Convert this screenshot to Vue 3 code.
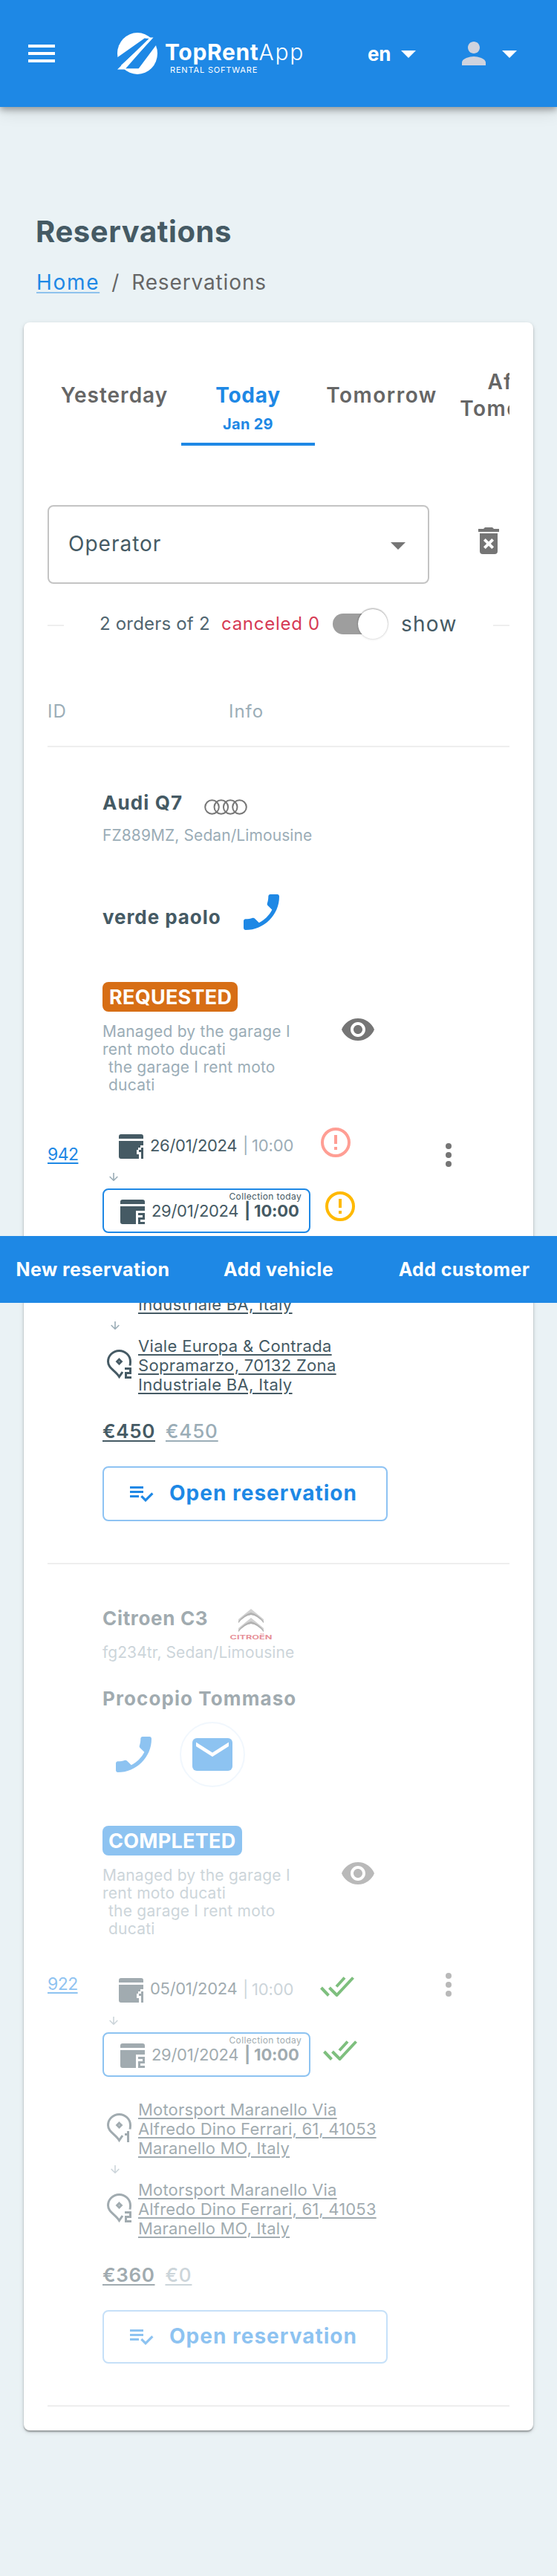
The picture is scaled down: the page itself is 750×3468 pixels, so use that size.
<script setup>
const tabs = [
  { label: 'Yesterday' },
  { label: 'Today', date: 'Jan 29', active: true },
  { label: 'Tomorrow' },
  { label: 'After Tomorrow' },
]
const puglia = ['Viale Europa & Contrada', 'Sopramarzo, 70132 Zona', 'Industriale BA, Italy']
const maranello = ['Motorsport Maranello Via', 'Alfredo Dino Ferrari, 61, 41053', 'Maranello MO, Italy']
const orders = [
  {
    id: '942', car: 'Audi Q7', brand: 'audi', details: 'FZ889MZ, Sedan/Limousine',
    client: 'verde paolo', status: 'REQUESTED', start: '26/01/2024', end: '29/01/2024',
    places: [puglia, puglia], total: '€450', due: '€450', done: false,
  },
  {
    id: '922', car: 'Citroen C3', brand: 'citroen', details: 'fg234tr, Sedan/Limousine',
    client: 'Procopio Tommaso', status: 'COMPLETED', start: '05/01/2024', end: '29/01/2024',
    places: [maranello, maranello], total: '€360', due: '€0', done: true,
  },
]
const phone = 'M17.38 10.79l-2.2-2.2c-.28-.28-.36-.67-.25-1.02.37-1.12.57-2.32.57-3.57 0-.55.45-1 1-1H20c.55 0 1 .45 1 1 0 9.39-7.61 17-17 17-.55 0-1-.45-1-1v-3.49c0-.55.45-1 1-1 1.24 0 2.45-.2 3.57-.57.35-.12.75-.03 1.02.24l2.2 2.2c2.83-1.45 5.15-3.76 6.59-6.59z'
</script>

<template>
  <div class="page">
    <header class="topbar">
      <svg class="burger" viewBox="0 0 36 24"><path d="M0 0h36v4H0zM0 10h36v4H0zM0 20h36v4H0z" fill="#fff" /></svg>
      <div class="brand">
        <svg class="brand-mark" viewBox="0 0 54 56">
          <ellipse cx="27" cy="28" rx="27" ry="28" fill="#fff" />
          <path d="M-1 34 37 7.3 44 8 0 48.6zM11 48.6 46 8.6 50 7 55 13 28.500 48.600z" fill="#1e88e5" />
          <path d="M0 49.500 43 7.500H37L38 6.500H48.500L9.500 48.500H29V49.500z" fill="#fff" />
        </svg>
        <div class="brand-text">
          <div class="brand-name"><b>TopRent</b><span>App</span></div>
          <div class="brand-sub">RENTAL SOFTWARE</div>
        </div>
      </div>
      <span class="lang">en</span>
      <svg class="caret" viewBox="0 0 20 10"><path d="M0 0h20L10 10z" fill="#fff" /></svg>
      <svg class="person" viewBox="4 4 16 16"><path d="M12 12c2.210 0 4-1.790 4-4s-1.790-4-4-4-4 1.790-4 4 1.790 4 4 4zm0 2c-2.670 0-8 1.340-8 4v2h16v-2c0-2.660-5.330-4-8-4z" fill="#cfd3de" /></svg>
      <svg class="caret" viewBox="0 0 20 10"><path d="M0 0h20L10 10z" fill="#fff" /></svg>
    </header>

    <h1 class="title">Reservations</h1>
    <nav class="crumbs"><a>Home</a><span class="slash">/</span><span>Reservations</span></nav>

    <main class="card">
      <div class="tabs">
        <div v-for="t in tabs" :key="t.label" class="tab" :class="{ active: t.active }">
          <div class="tab-label">{{ t.label }}</div>
          <div v-if="t.date" class="tab-date">{{ t.date }}</div>
        </div>
      </div>

      <div class="filter">
        <div class="select">
          <span>Operator</span>
          <svg class="select-caret" viewBox="0 0 20 10"><path d="M0 0h20L10 10z" fill="#757575" /></svg>
        </div>
        <svg class="trash" viewBox="0 0 24 24"><path d="M6,19A2,2 0 0,0 8,21H16A2,2 0 0,0 18,19V7H6V19M8.46,11.88L9.87,10.47L12,12.59L14.12,10.47L15.53,11.88L13.41,14L15.53,16.12L14.12,17.53L12,15.41L9.88,17.53L8.47,16.12L10.59,14L8.46,11.88M15.5,4L14.5,3H9.5L8.5,4H5V6H19V4H15.5Z" fill="#757575" /></svg>
      </div>

      <div class="stats">
        <i class="dash"></i>
        <span class="count">2 orders of 2</span>
        <span class="canceled">canceled 0</span>
        <span class="switch"><i></i></span>
        <span class="show">show</span>
        <i class="dash end"></i>
      </div>

      <div class="thead"><span class="th-id">ID</span><span>Info</span></div>

      <section v-for="o in orders" :key="o.id" class="order" :class="{ done: o.done }">
        <div class="order-body">
          <a class="order-id">{{ o.id }}</a>
          <div class="info">
            <div class="car">
              <span class="strong">{{ o.car }}</span>
              <svg v-if="o.brand === 'audi'" class="audi" viewBox="0 0 58 21">
                <g fill="none" stroke="#777" stroke-width="2">
                  <circle cx="10.500" cy="10.500" r="9.300" /><circle cx="22.800" cy="10.500" r="9.300" />
                  <circle cx="35.200" cy="10.500" r="9.300" /><circle cx="47.500" cy="10.500" r="9.300" />
                </g>
              </svg>
              <svg v-else class="citroen" viewBox="0 0 58 42">
                <path d="M29 0 46 14v5Q38 9 29 8 20 9 12 19v-5zM29 12 46 26v5Q38 21 29 20 20 21 12 31v-5z" fill="#a5a5a5" />
                <path d="M29 5Q38 7 46 17v2Q38 9 29 8 20 9 12 19v-2Q20 7 29 5zM29 17Q38 19 46 29v2Q38 21 29 20 20 21 12 31v-2Q20 19 29 17z" fill="#666" />
                <text x="0.500" y="41" textLength="57" lengthAdjust="spacingAndGlyphs" fill="#cf2030">CITROËN</text>
              </svg>
            </div>
            <div class="details">{{ o.details }}</div>
            <div class="client">
              <span class="strong">{{ o.client }}</span>
              <svg v-if="!o.done" class="phone" viewBox="0 0 24 24"><path :d="phone" fill="#1e88e5" /></svg>
            </div>
            <div v-if="o.done" class="contacts">
              <svg class="phone" viewBox="0 0 24 24"><path :d="phone" fill="#1e88e5" /></svg>
              <span class="mail">
                <svg viewBox="0 0 54 44"><rect width="54" height="44" rx="6" fill="#1e88e5" /><path d="M5 5.500 27 19.500 49 5.500V11L27 25 5 11z" fill="#fff" /></svg>
              </span>
            </div>

            <span class="badge">{{ o.status }}</span>
            <div class="managed">
              <div class="notes">
                <div>Managed by the garage I<br />rent moto ducati</div>
                <div class="sub">the garage I rent moto<br />ducati</div>
              </div>
              <svg class="eye" viewBox="0 0 24 24"><path d="M12 4.500C7 4.500 2.730 7.610 1 12c1.730 4.390 6 7.500 11 7.500s9.270-3.110 11-7.500c-1.730-4.390-6-7.500-11-7.500zM12 17c-2.760 0-5-2.240-5-5s2.240-5 5-5 5 2.240 5 5-2.240 5-5 5zm0-8c-1.660 0-3 1.340-3 3s1.340 3 3 3 3-1.340 3-3-1.340-3-3-3z" fill="#757575" /></svg>
            </div>

            <div v-for="n in 2" :key="'d' + n">
              <svg v-if="n === 2" class="down" viewBox="0 0 12 11"><path d="M6 0v10M.7 5 6 10.200 11.300 5" fill="none" stroke="#9badb7" stroke-width="1.600" /></svg>
              <div class="when" :class="n === 1 ? 'pickup' : 'collect'">
                <div class="datebox">
                  <span v-if="n === 2" class="hint">Collection today</span>
                  <svg class="cal" viewBox="0 0 33 33">
                    <path d="M0 6V3Q0 0 3 0H30Q33 0 33 3V6z" fill="#455a64" />
                    <path v-if="n === 1" d="M0 9H33V15H29V18H26V21H24V27H27V33H3Q0 33 0 30zM30 18H33V33H30V24H27V21H30z" fill="#455a64" />
                    <path v-else d="M0 9H33V15H21V33H3Q0 33 0 30zM24 18H33V27H27V30H33V33H24V24H30V21H24z" fill="#455a64" />
                  </svg>
                  <span class="date">{{ n === 1 ? o.start : o.end }}</span>
                  <span class="bar">|</span><span class="time">10:00</span>
                </div>
                <svg v-if="!o.done" class="state" viewBox="0 0 40 40" :class="n === 1 ? 'late' : 'due'">
                  <circle cx="20" cy="20" r="18" fill="none" stroke="currentColor" stroke-width="4" />
                  <path d="M18 10h4v12h-4zM18 26h4v4h-4z" fill="currentColor" />
                </svg>
                <svg v-else class="state ok" viewBox="0 0 46 27">
                  <path d="M1.500 15 11.500 25.500M12.500 15 22.500 25 44.500 1.500M22 13.500 33 1.500" fill="none" stroke="#008000" stroke-width="4" />
                </svg>
              </div>
            </div>

            <div class="places">
              <div v-for="(p, i) in o.places" :key="i">
                <svg v-if="i === 1" class="down" viewBox="0 0 12 11"><path d="M6 0v10M.7 5 6 10.200 11.300 5" fill="none" stroke="#9badb7" stroke-width="1.600" /></svg>
                <div class="place">
                  <svg class="pin" viewBox="0 0 33 39" fill="none" stroke="#455a64" stroke-width="3">
                    <path d="M31 21.500Q31.500 19 31.500 16A15 14.500 0 0 0 1.500 16C1.500 25 11 28 16.500 36.500L21 30" />
                    <path d="M16.500 13.200 19.300 16 16.500 18.800 13.700 16z" />
                    <path v-if="i === 0" d="M24 28.500H28.500M28.500 24V39" />
                    <path v-else d="M24 25.500H31.500V31.500H25.500V37.500H33" />
                  </svg>
                  <a class="address" :class="{ long: o.done }"><template v-for="(l, k) in p" :key="k">{{ l }}<br /></template></a>
                </div>
              </div>
            </div>

            <div class="prices"><a>{{ o.total }}</a><a class="rest">{{ o.due }}</a></div>
            <button class="open">
              <svg viewBox="0 0 24 24"><path d="M14 10H2v2h12v-2zm0-4H2v2h12V6zM2 16h8v-2H2v2zm19.500-4.500L23 13l-6.990 7-4.510-4.500L13 14l3.010 3 5.490-5.500z" fill="#1e88e5" /></svg>
              <span>Open reservation</span>
            </button>
          </div>
          <svg class="menu" viewBox="0 0 8 32"><circle cx="4" cy="4" r="4" /><circle cx="4" cy="16" r="4" /><circle cx="4" cy="28" r="4" /></svg>
        </div>
      </section>
    </main>

    <div class="actions"><a>New reservation</a><a>Add vehicle</a><a>Add customer</a></div>
  </div>
</template>

<style>
body { background: #eaf2f5; }
</style>

<style scoped>
.page {
  position: relative;
  width: 750px;
  height: 3468px;
  overflow: hidden;
  background: #eaf2f5;
  color: #455a64;
  font-family: Inter, "Open Sans", sans-serif;
  font-weight: 400;
}
.page * { box-sizing: border-box; }
svg { display: block; flex: none; }
span, a { white-space: nowrap; }

.topbar {
  display: flex;
  align-items: center;
  height: 144px;
  padding-left: 38px;
  background: #1e88e5;
  color: #fff;
  box-shadow: 0 4px 8px rgba(0, 0, 0, .3), 0 8px 20px rgba(0, 0, 0, .1);
}
.burger { width: 36px; height: 24px; }
.brand { display: flex; align-items: center; width: 337px; padding-left: 84px; }
.brand-mark { width: 54px; height: 56px; overflow: visible; }
.brand-text { padding: 12px 0 0 10px; }
.brand-name { display: flex; font-size: 30px; line-height: 30px; }
.brand-name b { font-weight: 700; letter-spacing: .022em; }
.brand-name span { font-weight: 300; letter-spacing: .06em; }
.brand-sub { padding: 2px 0 0 7px; font-size: 11px; line-height: 14px; letter-spacing: .076em; }
.lang { width: 45px; margin-left: 84px; padding-top: 2px; font-size: 26px; line-height: 32px; font-weight: 700; letter-spacing: -.01em; }
.caret { width: 20px; height: 10px; margin-top: 2px; }
.person { width: 32px; height: 32px; margin: 0 22px 0 62px; }

.title { margin: 144px 0 0 48px; font-size: 40px; line-height: 48px; font-weight: 700; letter-spacing: .015em; }
.crumbs { display: flex; margin: 26px 0 36px 49px; color: #666; font-size: 28px; line-height: 36px; letter-spacing: .031em; }
.crumbs a { color: #1e88e5; letter-spacing: .06em; text-decoration: underline 2px rgba(30, 136, 229, .45); text-underline-offset: 3px; }
.crumbs .slash { width: 43px; padding-left: 16px; }

.card {
  width: 686px;
  height: 2838px;
  margin-left: 32px;
  padding: 46px 32px 32px;
  border-radius: 8px;
  background: #fff;
  box-shadow: 0 2px 2px rgba(0, 0, 0, .3), 0 2px 6px rgba(0, 0, 0, .14);
}
.tabs { display: flex; height: 120px; overflow: hidden; }
.tab { flex: none; width: 180px; height: 120px; padding: 16px 12px 0; color: #666; text-align: center; }
.tab-label { display: flex; align-items: center; justify-content: center; height: 72px; font-size: 28px; line-height: 36px; font-weight: 600; letter-spacing: .036em; }
.tab:nth-child(n + 3) { padding-inline: 0; }
.tab:nth-child(n + 3) .tab-label { letter-spacing: .054em; }
.tab:nth-child(4) { padding-inline: 12px; }
.tab.active { border-bottom: 4px solid #1e88e5; color: #1e88e5; }
.tab.active .tab-label { font-weight: 700; letter-spacing: .026em; }
.tab-date { margin-top: -9px; font-size: 20px; line-height: 24px; font-weight: 700; letter-spacing: .014em; }

.filter { display: flex; padding-top: 80px; }
.select { display: flex; align-items: center; justify-content: space-between; width: 514px; height: 106px; padding: 0 30px 0 26px; border: 2px solid #c4c4c4; border-radius: 8px; font-size: 28px; letter-spacing: .036em; }
.select span { padding-bottom: 2px; }
.select-caret { width: 20px; height: 10px; margin-top: 4px; }
.trash { width: 48px; height: 48px; margin: 24px 0 0 56px; }

.stats { display: flex; align-items: center; height: 44px; margin-top: 32px; margin-bottom: 1px; line-height: 30px; }
.dash { width: 22px; height: 2px; margin-top: 3px; background: #eee; }
.dash.end { margin-left: auto; }
.count { width: 164px; margin-left: 48px; color: #506570; font-size: 24px; letter-spacing: .008em; }
.canceled { width: 150px; color: #d63a54; font-size: 24px; letter-spacing: .03em; }
.switch { display: flex; align-items: center; justify-content: flex-end; width: 56px; height: 28px; border-radius: 14px; background: #9e9e9e; }
.switch i { flex: none; width: 40px; height: 40px; margin-right: -18px; border-radius: 50%; background: #fff; box-shadow: 0 -1px 2px rgba(0, 0, 0, .35), 0 1px 3px rgba(0, 0, 0, .12); }
.show { margin-left: 36px; font-size: 28px; letter-spacing: .045em; }

.thead { display: flex; align-items: center; height: 143px; padding-top: 48px; border-bottom: 2px solid #eee; color: #9badb7; font-size: 24px; letter-spacing: .04em; }
.th-id { width: 244px; }

.order { border-bottom: 2px solid #eee; }
.order-body { display: flex; align-items: center; height: 1098px; }
.order.done .order-body { height: 1132px; opacity: .5; }
.order-id { width: 74px; padding-bottom: 3px; color: #1e88e5; font-size: 23px; letter-spacing: -.025em; text-decoration: underline 2px; text-underline-offset: 3px; }
.info { align-self: flex-start; width: 462px; padding-top: 59px; }
.done .info { padding-top: 57px; }
.strong { font-size: 26px; line-height: 32px; font-weight: 700; letter-spacing: .042em; }
.car { display: flex; height: 32px; }
.audi { width: 58px; height: 21px; margin: 11px 0 0 29px; }
.citroen { width: 58px; height: 42px; margin: 3px 0 0 29px; overflow: visible; }
.done .car .strong { letter-spacing: .026em; }
.citroen text { font: 700 8px Inter, sans-serif; }
.details { margin-top: 16px; color: #9badb7; font-size: 21px; line-height: 24px; letter-spacing: .004em; }
.done .details { margin-top: 18px; }
.client { display: flex; height: 64px; margin: 59px 0 62px; }
.client .strong { padding-top: 23px; letter-spacing: .036em; }
.phone { width: 64px; height: 64px; }
.client .phone { margin-left: 22px; }
.done .client { height: 32px; margin: 34px 0 15px; }
.done .client .strong { padding-top: 0; letter-spacing: .042em; }
.contacts { display: flex; align-items: center; height: 88px; margin-bottom: 52px; padding-left: 10px; }
.mail { display: flex; align-items: center; justify-content: center; width: 88px; height: 88px; margin-left: 30px; border: 2px solid #e4f1fd; border-radius: 50%; }
.mail svg { width: 54px; height: 44px; }

.badge { display: block; width: 182px; height: 40px; padding-left: 9px; border-radius: 8px; background: #d76e15; color: #fff; font-size: 27px; line-height: 41px; font-weight: 700; letter-spacing: .010em; }
.done .badge { width: 188px; padding-left: 8px; background: #1e88e5; }
.managed { display: flex; height: 111px; }
.notes { width: 320px; padding-top: 15px; color: #9badb7; font-size: 21px; line-height: 24px; letter-spacing: .011em; }
.notes .sub { padding-left: 8px; }
.eye { width: 48px; height: 48px; }

.when { display: flex; }
.pickup { height: 40px; margin-top: 45px; }
.down { width: 12px; height: 11px; margin: 21px 0 10px 9px; }
.datebox { position: relative; display: flex; width: 280px; font-size: 22px; line-height: 24px; padding: 12px 0 0 22px; }
.collect .datebox { height: 60px; padding: 16px 0 0 22px; border: 2px solid #1e88e5; border-radius: 8px; }
.hint { position: absolute; top: 2px; right: 10px; font-size: 12px; line-height: 14px; letter-spacing: .03em; }
.cal { width: 33px; height: 33px; margin-top: -3px; }
.date { width: 125px; margin-left: 9px; letter-spacing: -.014em; }
.done .pickup .date { margin-top: -1px; }
.bar, .time { color: #9badb7; }
.bar { width: 12px; }
.time { letter-spacing: -.005em; }
.collect .bar, .collect .time { color: #455a64; font-weight: 700; }
.collect .bar { width: 13px; }
.state { width: 40px; height: 40px; margin-left: 14px; }
.collect .state { margin: 4px 0 0 20px; }
.late { color: #ff9e94; }
.due { color: #ffb900; }
.state.ok { width: 46px; height: 27px; margin: 7px 0 0 13px; }
.collect .state.ok { margin: 11px 0 0 17px; }

.places { padding-top: 31px; }
.places .down { margin: 10px 0 9px 11px; }
.place { display: flex; height: 78px; }
.pin { width: 33px; height: 39px; margin: 18px 9px 0 6px; }
.address { font-size: 22px; line-height: 26px; letter-spacing: .015em; text-decoration: underline 2px; text-underline-offset: 3px; }
.address.long { letter-spacing: .008em; }

.prices { display: flex; gap: 14px; margin-top: 33px; font-size: 26px; line-height: 33px; height: 32px; font-weight: 600; letter-spacing: .024em; }
.prices a { text-decoration: underline 2px; text-underline-offset: 3px; }
.prices .rest { color: #9badb7; font-weight: 500; letter-spacing: .032em; }
.open { display: flex; align-items: center; width: 384px; height: 74px; margin-top: 32px; padding: 0 0 3px 32px; border: 2px solid #8ec3f3; border-radius: 8px; background: none; color: #1e88e5; font: 700 28px Inter, sans-serif; letter-spacing: .036em; }
.done .open { height: 72px; }
.open svg { width: 36px; height: 36px; }
.open span { margin-left: 20px; }
.menu { width: 8px; height: 32px; fill: #757575; }

.actions { position: absolute; top: 1664px; left: 0; display: flex; align-items: center; width: 750px; height: 90px; background: #1e88e5; color: #fff; font-size: 25px; font-weight: 700; letter-spacing: .016em; }
.actions a { flex: 1; text-align: center; }
</style>
